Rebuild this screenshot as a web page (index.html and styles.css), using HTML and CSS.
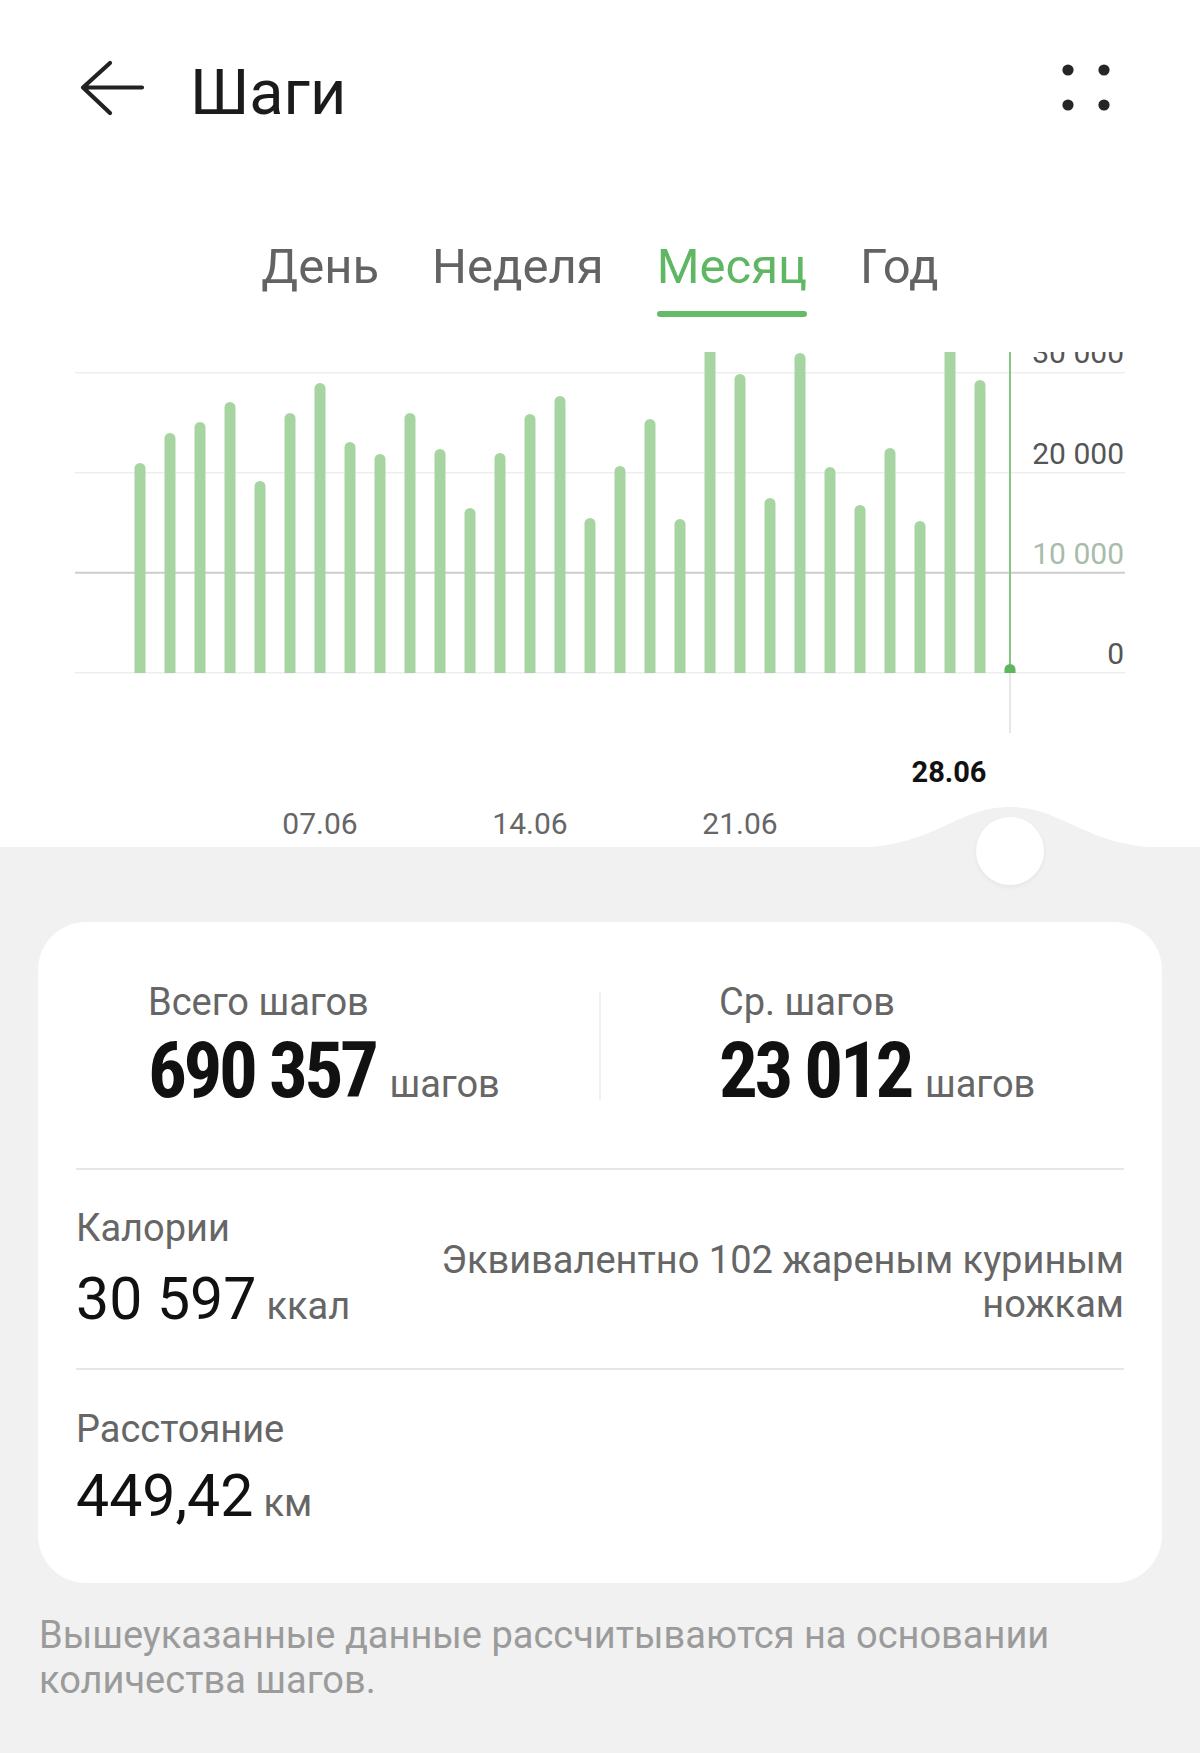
FILE: index.html
```html
<!DOCTYPE html>
<html lang="ru">
<head>
<meta charset="utf-8">
<title>Шаги</title>
<link rel="stylesheet" href="styles.css">
</head>
<body>
<div class="page">
  <header class="header">
    <svg class="back" viewBox="0 0 68 56" width="68" height="56">
      <path class="back-path" d="M32 3 L5 27.5 L32 53 M5 27.5 H64"/>
    </svg>
    <div class="title">Шаги</div>
    <svg class="menu" viewBox="0 0 52 52" width="52" height="52">
      <circle class="dot" cx="8" cy="8" r="5.6"/>
      <circle class="dot" cx="44" cy="8" r="5.6"/>
      <circle class="dot" cx="8" cy="43" r="5.6"/>
      <circle class="dot" cx="44" cy="43" r="5.6"/>
    </svg>
  </header>

  <nav class="tabs">
    <div class="tab">День</div>
    <div class="tab">Неделя</div>
    <div class="tab active">Месяц</div>
    <div class="tab">Год</div>
  </nav>

  <svg class="chart" viewBox="0 352 1200 495" width="1200" height="495">
    <defs>
      <clipPath id="plot"><rect x="0" y="352" width="1200" height="321"/></clipPath>
    </defs>
    <line class="grid" x1="75" y1="372.7" x2="1125" y2="372.7"/>
    <line class="grid" x1="75" y1="472.7" x2="1125" y2="472.7"/>
    <line class="grid goal" x1="75" y1="572.7" x2="1125" y2="572.7"/>
    <line class="grid" x1="75" y1="672.7" x2="1125" y2="672.7"/>

    <text class="ylab" x="1124" y="363">30 000</text>
    <text class="ylab" x="1124" y="463.5">20 000</text>
    <text class="ylab goal-lab" x="1124" y="564">10 000</text>
    <text class="ylab" x="1124" y="664">0</text>

    <g class="bars" clip-path="url(#plot)">
      <rect x="134.5" y="463" width="11" height="217" rx="5.5"/>
      <rect x="164.5" y="433" width="11" height="247" rx="5.5"/>
      <rect x="194.5" y="422" width="11" height="258" rx="5.5"/>
      <rect x="224.5" y="402" width="11" height="278" rx="5.5"/>
      <rect x="254.5" y="481" width="11" height="199" rx="5.5"/>
      <rect x="284.5" y="413" width="11" height="267" rx="5.5"/>
      <rect x="314.5" y="383" width="11" height="297" rx="5.5"/>
      <rect x="344.5" y="442" width="11" height="238" rx="5.5"/>
      <rect x="374.5" y="454" width="11" height="226" rx="5.5"/>
      <rect x="404.5" y="413" width="11" height="267" rx="5.5"/>
      <rect x="434.5" y="449" width="11" height="231" rx="5.5"/>
      <rect x="464.5" y="508" width="11" height="172" rx="5.5"/>
      <rect x="494.5" y="453" width="11" height="227" rx="5.5"/>
      <rect x="524.5" y="414" width="11" height="266" rx="5.5"/>
      <rect x="554.5" y="396" width="11" height="284" rx="5.5"/>
      <rect x="584.5" y="518" width="11" height="162" rx="5.5"/>
      <rect x="614.5" y="466" width="11" height="214" rx="5.5"/>
      <rect x="644.5" y="419" width="11" height="261" rx="5.5"/>
      <rect x="674.5" y="519" width="11" height="161" rx="5.5"/>
      <rect x="704.5" y="340" width="11" height="340" rx="5.5"/>
      <rect x="734.5" y="374" width="11" height="306" rx="5.5"/>
      <rect x="764.5" y="498" width="11" height="182" rx="5.5"/>
      <rect x="794.5" y="353" width="11" height="327" rx="5.5"/>
      <rect x="824.5" y="467" width="11" height="213" rx="5.5"/>
      <rect x="854.5" y="505" width="11" height="175" rx="5.5"/>
      <rect x="884.5" y="448" width="11" height="232" rx="5.5"/>
      <rect x="914.5" y="521" width="11" height="159" rx="5.5"/>
      <rect x="944.5" y="340" width="11" height="340" rx="5.5"/>
      <rect x="974.5" y="380" width="11" height="300" rx="5.5"/>
    </g>

    <line class="cursor" x1="1010" y1="352" x2="1010" y2="673"/>
    <line class="cursor-tail" x1="1010" y1="673" x2="1010" y2="733"/>
    <g clip-path="url(#plot)">
      <rect class="bar-sel" x="1004.5" y="664" width="11" height="16" rx="5.5"/>
    </g>

    <text class="sel-date" x="949" y="782">28.06</text>
    <text class="xlab" x="320" y="834">07.06</text>
    <text class="xlab" x="530" y="834">14.06</text>
    <text class="xlab" x="740" y="834">21.06</text>

    <path class="bump" d="M850 848 C935 848 955 807 1010 807 C1065 807 1085 848 1170 848 Z"/>
  </svg>

  <section class="gray">
    <div class="knob"></div>
    <div class="card">
      <div class="stats">
        <div class="stat stat-left">
          <div class="label">Всего шагов</div>
          <div class="big">690 357<span class="unit unit-big">шагов</span></div>
        </div>
        <div class="vdiv"></div>
        <div class="stat stat-right">
          <div class="label">Ср. шагов</div>
          <div class="big">23 012<span class="unit unit-big">шагов</span></div>
        </div>
      </div>
      <div class="hr"></div>
      <div class="row row-cal">
        <div class="metric">
          <div class="label">Калории</div>
          <div class="num num-cal">30 597<span class="unit unit-sm">ккал</span></div>
        </div>
        <div class="equiv">Эквивалентно 102 жареным куриным ножкам</div>
      </div>
      <div class="hr"></div>
      <div class="row row-dist">
        <div class="metric">
          <div class="label">Расстояние</div>
          <div class="num">449,42<span class="unit unit-sm">км</span></div>
        </div>
      </div>
    </div>
    <p class="note">Вышеуказанные данные рассчитываются на основании количества шагов.</p>
  </section>
</div>
</body>
</html>
```

FILE: styles.css
```css
* { box-sizing: border-box; }

html, body {
  margin: 0;
  padding: 0;
  background: #ffffff;
}

body {
  width: 1200px;
  font-family: Roboto, "Noto Sans", "DejaVu Sans", sans-serif;
  color: #111;
}

.page {
  min-height: 1753px;
  display: flex;
  flex-direction: column;
}

/* Header */
.header {
  display: flex;
  align-items: flex-start;
  padding: 56px 0 0 78px;
  height: 130px;
}

.back {
  display: block;
  margin-top: 4px;
  flex: none;
}

.back-path {
  fill: none;
  stroke: #222;
  stroke-width: 4.2;
  stroke-linecap: round;
  stroke-linejoin: round;
}

.title {
  margin-left: 44px;
  font-size: 63px;
  line-height: 74px;
  font-weight: 400;
  color: #1b1b1b;
}

.menu {
  display: block;
  margin-left: auto;
  margin-right: 88px;
  margin-top: 6px;
  flex: none;
}

.dot { fill: #262626; }

/* Tabs */
.tabs {
  display: flex;
  justify-content: center;
  align-items: flex-start;
  gap: 53px;
  margin-top: 108px;
  height: 79px;
}

.tab {
  display: flex;
  flex-direction: column;
  font-size: 49px;
  line-height: 57px;
  color: #636363;
}

.tab.active { color: #5fb763; }

.tab.active::after {
  content: "";
  display: block;
  height: 6px;
  border-radius: 3px;
  background: #66bb6a;
  margin-top: 16px;
}

/* Chart */
.chart {
  display: block;
  margin-top: 35px;
  width: 1200px;
  height: 495px;
}

.grid {
  stroke: #eeeeee;
  stroke-width: 1.6;
}

.grid.goal {
  stroke: #cdcdcd;
  stroke-width: 2;
}

.ylab {
  font-family: Roboto, "Noto Sans", sans-serif;
  font-size: 30px;
  fill: #555555;
  text-anchor: end;
}

.ylab.goal-lab { fill: #a9bba9; }

.bars rect { fill: #a6d5a1; }

.bar-sel { fill: #5db761; }

.cursor {
  stroke: #86c586;
  stroke-width: 2;
}

.cursor-tail {
  stroke: #e6e6e6;
  stroke-width: 2;
}

.xlab {
  font-family: Roboto, "Noto Sans", sans-serif;
  font-size: 30px;
  fill: #666666;
  text-anchor: middle;
}

.sel-date {
  font-family: Roboto, "Noto Sans", sans-serif;
  font-size: 29px;
  font-weight: 700;
  fill: #111111;
  text-anchor: middle;
}

.bump { fill: #f1f1f1; }

/* Gray area */
.gray {
  flex: 1;
  position: relative;
  background: #f1f1f1;
  padding: 75px 38px 40px;
}

.knob {
  position: absolute;
  left: 976px;
  top: -30px;
  width: 68px;
  height: 68px;
  border-radius: 50%;
  background: #ffffff;
  box-shadow: 0 2px 5px rgba(0, 0, 0, 0.05);
}

.card {
  background: #ffffff;
  border-radius: 48px;
  padding: 0 38px;
}

.stats {
  display: grid;
  grid-template-columns: 1fr 2px 1fr;
  padding: 58px 0 57px;
}

.stat-left { padding-left: 72px; }
.stat-right { padding-left: 118px; }

.vdiv {
  background: #efefef;
  margin-top: 12px;
  height: 108px;
}

.label {
  font-size: 38px;
  line-height: 44px;
  color: #666666;
  white-space: nowrap;
}

.big {
  margin-top: 7px;
  font-family: "Liberation Sans Narrow", "Roboto Condensed", "DejaVu Sans Condensed", Roboto, sans-serif;
  font-weight: 700;
  font-size: 77px;
  line-height: 80px;
  letter-spacing: -3.4px;
  color: #111111;
  white-space: nowrap;
}

.unit {
  font-family: Roboto, "Noto Sans", sans-serif;
  font-weight: 400;
  font-size: 38px;
  line-height: 1;
  letter-spacing: normal;
  color: #666666;
  margin-left: 17px;
}

.unit-big { margin-left: 14px; }

.unit-sm { margin-left: 10px; }

.hr {
  height: 2px;
  background: #e6e6e6;
}

.row {
  display: flex;
  justify-content: space-between;
  align-items: flex-start;
}

.row-cal { padding: 36px 0 35px; }
.row-dist { padding: 37px 0 53px; }

.num {
  margin-top: 11px;
  font-size: 59px;
  line-height: 68px;
  color: #111111;
  white-space: nowrap;
}

.num.num-cal { margin-top: 15px; }

.equiv {
  width: 700px;
  margin-top: 32px;
  text-align: right;
  font-size: 38px;
  line-height: 44px;
  color: #666666;
}

.note {
  margin: 30px 0 0;
  padding-left: 1px;
  font-size: 38px;
  line-height: 45px;
  color: #9b9b9b;
}
```
